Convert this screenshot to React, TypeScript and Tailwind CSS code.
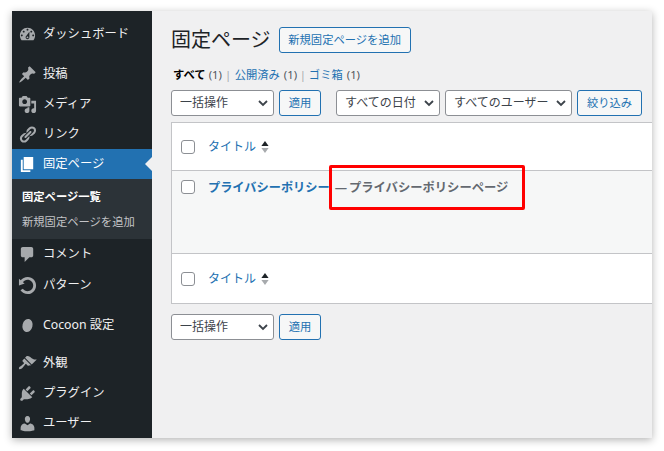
import React from 'react';

const fontStack = "font-['Noto_Sans','Noto_Sans_CJK_JP',sans-serif]";

const Dashicon = ({ d }: { d: string }) => (
  <svg width="19" height="19" viewBox="0 0 20 20" fill="currentColor">
    <path d={d} />
  </svg>
);

const icons = {
  dashboard: 'M3.76 16h12.48c1.1-1.37 1.76-3.11 1.76-5 0-4.42-3.58-8-8-8s-8 3.58-8 8c0 1.89.66 3.63 1.76 5zM10 4c.55 0 1 .45 1 1s-.45 1-1 1-1-.45-1-1 .45-1 1-1zM6 6c.55 0 1 .45 1 1s-.45 1-1 1-1-.45-1-1 .45-1 1-1zm8 0c.55 0 1 .45 1 1s-.45 1-1 1-1-.45-1-1 .45-1 1-1zm-5.37 5.55L12 7v6c0 1.1-.9 2-2 2s-2-.9-2-2c0-.57.24-1.08.63-1.45zM4 10c.55 0 1 .45 1 1s-.45 1-1 1-1-.45-1-1 .45-1 1-1zm12 0c.55 0 1 .45 1 1s-.45 1-1 1-1-.45-1-1 .45-1 1-1zm-5 3c0-.55-.45-1-1-1s-1 .45-1 1 .45 1 1 1 1-.45 1-1z',
  post: 'M10.44 3.02l1.82-1.82 6.36 6.35-1.83 1.82c-1.05-.68-2.48-.57-3.41.36l-.75.75c-.92.93-1.04 2.35-.35 3.41l-1.83 1.82-2.41-2.41-2.8 2.79c-.42.42-3.38 2.71-3.8 2.29s1.86-3.39 2.28-3.81l2.79-2.79L4.1 9.36l1.83-1.82c1.05.69 2.48.57 3.4-.36l.75-.75c.93-.92 1.05-2.35.36-3.41z',
  media: 'M13 11V4c0-.55-.45-1-1-1h-1.67L9 1H5L3.67 3H2c-.55 0-1 .45-1 1v7c0 .55.45 1 1 1h10c.55 0 1-.45 1-1zM7 4.5c1.38 0 2.5 1.12 2.5 2.5S8.38 9.5 7 9.5 4.5 8.38 4.5 7 5.62 4.5 7 4.5zM14 6h5v10.5c0 1.38-1.12 2.5-2.5 2.5S14 17.88 14 16.5s1.12-2.5 2.5-2.5c.17 0 .34.02.5.05V9h-3V6zm-4 8.05V13h2v3.5c0 1.38-1.12 2.5-2.5 2.5S7 17.88 7 16.5 8.12 14 9.5 14c.17 0 .34.02.5.05z',
  links: 'M17.74 2.76c1.68 1.69 1.68 4.41 0 6.1l-1.53 1.52c-1.12 1.12-2.7 1.47-4.14 1.09l2.62-2.61.76-.77.76-.76c.84-.84.84-2.2 0-3.04-.84-.85-2.2-.85-3.04 0l-.77.76-3.38 3.38c-.37-1.44-.02-3.02 1.1-4.14l1.52-1.53c1.69-1.68 4.42-1.68 6.1 0zM8.59 13.43l5.34-5.34c.42-.42.42-1.1 0-1.52-.44-.43-1.13-.39-1.53 0l-5.33 5.34c-.42.42-.42 1.1 0 1.52.44.43 1.13.39 1.52 0zm-.76 2.29l4.14-4.15c.38 1.44.03 3.02-1.09 4.14l-1.52 1.53c-1.69 1.68-4.41 1.68-6.1 0-1.68-1.68-1.68-4.42 0-6.1l1.53-1.52c1.12-1.12 2.7-1.47 4.14-1.1l-4.14 4.15c-.85.84-.85 2.2 0 3.05.84.84 2.2.84 3.04 0z',
  page: 'M6 15V2h10v13H6zm-1 1h8v2H3V5h2v11z',
  comments: 'M5 2h9c1.1 0 2 .9 2 2v7c0 1.1-.9 2-2 2h-2l-5 5v-5H5c-1.1 0-2-.9-2-2V4c0-1.1.9-2 2-2z',
  rotate: 'M10.25 1.02c5.1 0 8.75 4.04 8.75 9s-3.65 9-8.75 9c-3.2 0-6.02-1.59-7.68-3.99l2.59-1.52c1.1 1.5 2.86 2.51 4.84 2.51 3.3 0 6-2.79 6-6s-2.7-6-6-6c-1.97 0-3.72 1-4.82 2.49L7 8.02l-6 2v-7L2.89 4.6C4.5 2.41 7.15 1.02 10.25 1.02z',
  appearance: 'M14.48 11.06L7.41 3.99l1.5-1.5c.5-.56 2.3-.47 3.51.32 1.21.8 1.43 1.28 2.91 2.1 1.18.64 2.45 1.26 4.45.85zm-.71.71L6.7 4.7 4.93 6.47c-.39.39-.39 1.02 0 1.41l1.06 1.06c.39.39.39 1.03 0 1.42-.6.6-1.43 1.11-2.21 1.69-.35.26-.7.53-1.01.84C1.43 13.23.4 14.84 1.25 15.7c.86.85 2.47-.18 3.81-1.52.31-.31.58-.66.85-1.02.57-.78 1.08-1.61 1.69-2.21.39-.39 1.02-.39 1.41 0l1.06 1.06c.39.39 1.02.39 1.41 0z',
  plugins: 'M13.11 4.36L9.87 7.6 8 5.73l3.24-3.24c.35-.34 1.05-.2 1.56.32.52.51.66 1.21.31 1.55zm-8 1.77l.91-1.12 9.01 9.01-1.19.84c-.71.71-2.63 1.16-3.82 1.16H6.14L4.9 17.26c-.59.59-1.54.59-2.12 0-.59-.58-.59-1.53 0-2.12l1.24-1.24v-3.88c0-1.13.4-3.19 1.09-3.89zm7.26 3.97l3.24-3.24c.34-.35 1.04-.21 1.55.31.52.51.66 1.21.31 1.55l-3.24 3.25z',
  users: 'M10 9.25c-2.27 0-2.73-3.44-2.73-3.44C7 4.02 7.82 2 9.97 2c2.16 0 2.98 2.02 2.71 3.81 0 0-.41 3.44-2.68 3.44zm0 2.57L12.72 10c2.39 0 4.52 2.33 4.52 4.53v2.49s-3.65 1.13-7.24 1.13c-3.65 0-7.24-1.13-7.24-1.13v-2.49c0-2.25 1.94-4.48 4.47-4.48z',
};

const CocoonIcon = () => (
  <svg width="19" height="19" viewBox="0 0 19 19" fill="currentColor">
    <ellipse cx="9.5" cy="9.5" rx="5" ry="6.6" transform="rotate(14 9.5 9.5)" />
  </svg>
);

const MenuItem = ({ icon, label }: { icon: React.ReactNode; label: string }) => (
  <div className="flex h-[30px] items-center text-[12.3px] text-[#f0f0f1]">
    <div className="mr-[1px] flex w-[30px] shrink-0 justify-center text-[#a7aaad]">{icon}</div>
    <span className="pt-[1px]">{label}</span>
  </div>
);

const Sidebar = () => (
  <aside className="flex h-full w-[140px] shrink-0 flex-col bg-[#1d2327] pt-[8px]">
    <MenuItem icon={<Dashicon d={icons.dashboard} />} label="ダッシュボード" />
    <div className="h-[10px]" />
    <MenuItem icon={<Dashicon d={icons.post} />} label="投稿" />
    <MenuItem icon={<Dashicon d={icons.media} />} label="メディア" />
    <MenuItem icon={<Dashicon d={icons.links} />} label="リンク" />
    <div className="relative flex h-[30px] items-center bg-[#2271b1] text-[12.3px] text-white">
      <div className="mr-[1px] flex w-[30px] shrink-0 justify-center"><Dashicon d={icons.page} /></div>
      <span className="pt-[1px]">固定ページ</span>
      <div className="absolute right-0 top-[8px] border-y-[7px] border-r-[7px] border-y-transparent border-r-[#f0f0f1]" />
    </div>
    <div className="flex h-[60px] flex-col bg-[#2c3338] pt-[6px] pl-[10px] text-[11.3px]">
      <div className="flex h-[25px] items-center font-bold text-white">固定ページ一覧</div>
      <div className="flex h-[24px] items-center text-[#c3c4c7]">新規固定ページを追加</div>
    </div>
    <MenuItem icon={<Dashicon d={icons.comments} />} label="コメント" />
    <div className="h-[1px]" />
    <MenuItem icon={<Dashicon d={icons.rotate} />} label="パターン" />
    <div className="h-[10px]" />
    <MenuItem icon={<CocoonIcon />} label="Cocoon 設定" />
    <div className="h-[8px]" />
    <MenuItem icon={<Dashicon d={icons.appearance} />} label="外観" />
    <MenuItem icon={<Dashicon d={icons.plugins} />} label="プラグイン" />
    <MenuItem icon={<Dashicon d={icons.users} />} label="ユーザー" />
  </aside>
);

const Select = ({ label, width }: { label: string; width: string }) => (
  <div className={`flex h-[26px] items-center justify-between rounded-[3px] border border-[#8c8f94] bg-white pl-[8px] pr-[4px] text-[12px] text-[#3c434a] ${width}`}>
    <span className="whitespace-nowrap">{label}</span>
    <svg width="12" height="12" viewBox="0 0 12 12" fill="none" stroke="#3c434a" strokeWidth="1.8" className="shrink-0">
      <path d="M2 4l4 4 4-4" />
    </svg>
  </div>
);

const Button = ({ label, className = '' }: { label: string; className?: string }) => (
  <div className={`flex h-[26px] items-center justify-center whitespace-nowrap rounded-[3px] border border-[#2271b1] bg-[#f6f7f7] pt-[1px] text-[11.3px] text-[#2271b1] ${className}`}>
    {label}
  </div>
);

const Checkbox = () => <div className="h-[14px] w-[14px] rounded-[3px] border border-[#8c8f94] bg-white" />;

const TitleHead = () => (
  <div className="flex items-center">
    <div className="flex w-[36px] shrink-0 justify-center pr-[4px]"><Checkbox /></div>
    <span className="text-[12px] text-[#2271b1]">タイトル</span>
    <svg width="8" height="14" viewBox="0 0 8 14" className="ml-[5px]">
      <path d="M4 1l3.6 5H.4z" fill="#1d2327" />
      <path d="M4 13L.4 8h7.2z" fill="#a7aaad" />
    </svg>
  </div>
);

const Count = () => <span className="w-[13px] whitespace-nowrap text-[#50575e]">(1)</span>;

export default function App() {
  return (
    <div className={`h-[451px] w-[664px] bg-white pt-[11px] pl-[12px] ${fontStack}`}>
      <div className="flex h-[427px] w-[640px] overflow-hidden bg-[#f0f0f1] shadow-[0_2px_8px_rgba(0,0,0,0.3)]">
        <Sidebar />
        <main className="min-w-0 flex-1 pl-[19px]">
          <div className="flex h-[56px] items-center pt-[1px]">
            <h1 className="text-[20px] font-normal text-[#1d2327]">固定ページ</h1>
            <Button label="新規固定ページを追加" className="ml-[8px] w-[132px]" />
          </div>
          <div className="flex h-[14px] items-center pl-[2px] pt-[2px] text-[11.3px]">
            <span className="font-bold text-black">すべて</span>
            <span className="ml-[3px]" />
            <Count />
            <span className="w-[13px] text-center text-[#a7aaad]">|</span>
            <span className="text-[#2271b1]">公開済み</span>
            <span className="ml-[4px]" />
            <Count />
            <span className="w-[12px] text-center text-[#a7aaad]">|</span>
            <span className="text-[#2271b1]">ゴミ箱</span>
            <span className="ml-[4px]" />
            <Count />
          </div>
          <div className="mt-[9px] flex items-center">
            <Select label="一括操作" width="w-[103px]" />
            <Button label="適用" className="ml-[5px] w-[42px]" />
            <div className="w-[15px]" />
            <Select label="すべての日付" width="w-[104px]" />
            <div className="w-[5px]" />
            <Select label="すべてのユーザー" width="w-[127px]" />
            <Button label="絞り込み" className="ml-[5px] w-[65px]" />
          </div>
          <div className="mt-[6px] flex h-[182px] flex-col border border-r-0 border-[#c3c4c7] bg-white">
            <div className="flex h-[48px] items-center border-b border-[#c3c4c7]"><TitleHead /></div>
            <div className="relative flex h-[83px] items-start border-b border-[#c3c4c7] bg-[#f6f7f7] pt-[7px]">
              <div className="flex h-[18px] w-[36px] shrink-0 items-center justify-center pr-[4px]"><Checkbox /></div>
              <span className="mt-[1px] text-[12.2px] font-bold leading-[18px] text-[#2271b1]">プライバシーポリシー</span>
              <span className="ml-[5px] mt-[1px] text-[12.3px] font-semibold leading-[18px] text-[#646970]">—</span>
              <span className="ml-[2px] mt-[1px] text-[12.3px] font-semibold leading-[18px] text-[#646970]">プライバシーポリシーページ</span>
              <div className="absolute left-[157px] top-[-6px] h-[45px] w-[196px] rounded-[2px] border-[3px] border-[#ff0000]" />
            </div>
            <div className="flex flex-1 items-center"><TitleHead /></div>
          </div>
          <div className="mt-[10px] flex items-center">
            <Select label="一括操作" width="w-[103px]" />
            <Button label="適用" className="ml-[5px] w-[42px]" />
          </div>
        </main>
      </div>
    </div>
  );
}
